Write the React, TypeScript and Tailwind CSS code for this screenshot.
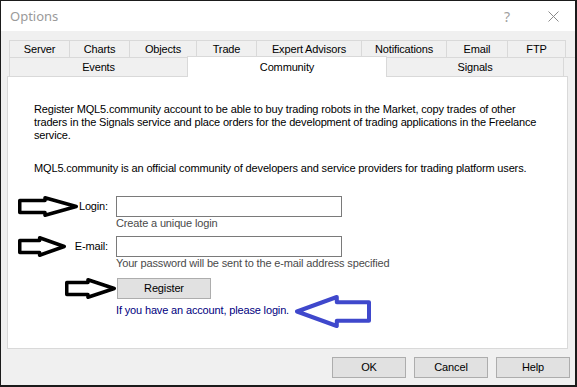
import React from 'react'

type ArrowProps = {
  w: number
  h: number
  color?: string
  stroke?: number
  left?: boolean
}

// hand-drawn style outline arrow
function Arrow({ w, h, color = '#000', stroke = 3.5, left = false }: ArrowProps) {
  const s = stroke / 2
  const shaftTop = h * 0.22
  const shaftBot = h * 0.78
  const neck = w * 0.45
  const pts = [
    [s, shaftTop],
    [neck, shaftTop],
    [neck, s],
    [w - s, h / 2],
    [neck, h - s],
    [neck, shaftBot],
    [s, shaftBot],
  ]
    .map(([x, y]) => `${left ? w - x : x},${y}`)
    .join(' ')
  return (
    <svg width={w} height={h} viewBox={`0 0 ${w} ${h}`} className="block shrink-0">
      <polygon points={pts} fill="#fff" stroke={color} strokeWidth={stroke} strokeLinejoin="round" />
    </svg>
  )
}

const row1 = [
  { label: 'Server', w: 'w-[61px]' },
  { label: 'Charts', w: 'w-[60px]' },
  { label: 'Objects', w: 'w-[67px]' },
  { label: 'Trade', w: 'w-[60px]' },
  { label: 'Expert Advisors', w: 'w-[105px]' },
  { label: 'Notifications', w: 'w-[85px]' },
  { label: 'Email', w: 'w-[61px]' },
  { label: 'FTP', w: 'w-[58px]' },
]

function WinButton({ children, className = '' }: { children: React.ReactNode; className?: string }) {
  return (
    <div
      className={`flex items-center justify-center h-[21px] bg-[#e1e1e1] border border-[#adadad] text-black ${className}`}
    >
      {children}
    </div>
  )
}

export default function App() {
  return (
    <div className="w-[577px] h-[387px] bg-[#1b1b1b] p-px font-['Liberation_Sans',Arial,sans-serif] text-[11px] leading-[13px] tracking-[-0.15px] text-black">
      <div className="w-[574px] h-[384px] flex flex-col bg-[#f0f0f0]">
        {/* title bar */}
        <div className="h-[30px] bg-white flex items-center shrink-0">
          <span className="ml-[9px] text-[13px] tracking-normal text-[#9a9a9a] font-['Noto_Sans',sans-serif]">Options</span>
          <span className="ml-auto text-[14px] text-[#a0a0a0] font-['Noto_Sans',sans-serif]">?</span>
          <svg width="11" height="11" viewBox="0 0 11 11" className="ml-[38px] mr-[16px]">
            <path d="M0.5 0.5 L10.5 10.5 M10.5 0.5 L0.5 10.5" stroke="#8a8a8a" strokeWidth="1" />
          </svg>
        </div>

        <div className="flex flex-col pl-[6px] pt-[9px]">
          {/* tabs */}
          <div className="ml-[2px] flex flex-col">
            <div className="flex h-[17px]">
              {row1.map((t, i) => (
                <div
                  key={t.label}
                  className={`${t.w} flex items-center justify-center pt-px border-t border-r border-[#d9d9d9] ${i === 0 ? 'border-l' : ''}`}
                >
                  {t.label}
                </div>
              ))}
            </div>
            <div className="flex h-[19px] border-t border-[#d9d9d9]">
              <div className="w-[179px] flex items-center justify-center pt-px border-l border-r border-[#d9d9d9]">
                Events
              </div>
              <div className="relative z-10 w-[200px] h-[21px] -mt-[2px] -ml-px bg-white border-x border-t border-[#d9d9d9] flex justify-center pt-[4px]">
                Community
              </div>
              <div className="w-[178px] -ml-px flex items-center justify-center pt-px border-l border-r border-[#d9d9d9]">
                Signals
              </div>
            </div>
          </div>

          {/* content panel */}
          <div className="w-[561px] h-[273px] bg-white border border-[#d9d9d9] pl-[26px] pt-[26px]">
            <p>
              Register MQL5.community account to be able to buy trading robots in the Market, copy trades of other
              <br />
              traders in the Signals service and place orders for the development of trading applications in the Freelance
              <br />
              service.
            </p>
            <p className="mt-[20px]">
              MQL5.community is an official community of developers and service providers for trading platform users.
            </p>

            <div className="-ml-[26px] mt-[21px] flex flex-col">
              {/* login */}
              <div className="flex items-center h-[21px]">
                <div className="w-[100px] flex items-center pl-[10px]">
                  <Arrow w={60} h={21} />
                  <span className="ml-auto">Login:</span>
                </div>
                <div className="ml-[8px] w-[226px] h-[21px] border border-[#7a7a7a] bg-white" />
              </div>
              <div className="ml-[108px] text-[#4a4a4a]">Create a unique login</div>

              {/* email */}
              <div className="flex items-center h-[21px] mt-[6px]">
                <div className="w-[100px] flex items-center pl-[10px]">
                  <Arrow w={48} h={21} />
                  <span className="ml-auto">E-mail:</span>
                </div>
                <div className="ml-[8px] w-[226px] h-[21px] border border-[#7a7a7a] bg-white" />
              </div>
              <div className="ml-[108px] text-[#4a4a4a]">Your password will be sent to the e-mail address specified</div>

              {/* register */}
              <div className="flex items-center mt-[8px] pl-[57px]">
                <Arrow w={51} h={21} />
                <WinButton className="ml-px w-[94px]">Register</WinButton>
              </div>

              <div className="relative ml-[108px] mt-[5px] text-[#000080] w-max">
                If you have an account, please login.
                <div className="absolute left-[179px] -top-[9px]">
                  <Arrow w={76} h={33} color="#3f48cc" stroke={4} left />
                </div>
              </div>
            </div>
          </div>

          {/* bottom buttons */}
          <div className="flex justify-end gap-[8px] pr-[5px] mt-[8px]">
            <WinButton className="w-[74px]">OK</WinButton>
            <WinButton className="w-[74px]">Cancel</WinButton>
            <WinButton className="w-[74px]">Help</WinButton>
          </div>
        </div>
      </div>
    </div>
  )
}
